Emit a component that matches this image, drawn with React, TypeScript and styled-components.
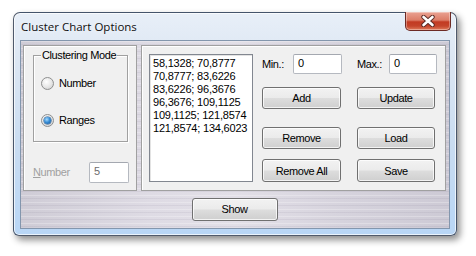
import React from "react";
import styled, { createGlobalStyle, css } from "styled-components";

const GlobalStyle = createGlobalStyle`
  html, body {
    margin: 0;
    padding: 0;
    background: #ffffff;
    width: 476px;
    height: 256px;
    overflow: hidden;
  }
`;

const ranges = [
  "58,1328; 70,8777",
  "70,8777; 83,6226",
  "83,6226; 96,3676",
  "96,3676; 109,1125",
  "109,1125; 121,8574",
  "121,8574; 134,6023",
];

const App: React.FC = () => {
  return (
    <Page>
      <GlobalStyle />
      <Window>
        <TitleBar>
          <Title>Cluster Chart Options</Title>
          <CloseButton>
            <svg width="16" height="12" viewBox="0 0 16 12">
              <path
                d="M3.5 2 L12.5 10 M12.5 2 L3.5 10"
                stroke="#5a2a24"
                strokeWidth="4.4"
                strokeLinecap="round"
              />
              <path
                d="M3.5 2 L12.5 10 M12.5 2 L3.5 10"
                stroke="#ffffff"
                strokeWidth="2.6"
                strokeLinecap="round"
              />
            </svg>
          </CloseButton>
        </TitleBar>
        <Client>
          <PanelRow>
            <LeftPanel>
              <GroupBox>
                <Legend>Clustering Mode</Legend>
                <RadioList>
                  <RadioRow>
                    <Radio />
                    <Label>Number</Label>
                  </RadioRow>
                  <RadioRow>
                    <Radio $checked />
                    <Label>Ranges</Label>
                  </RadioRow>
                </RadioList>
              </GroupBox>
              <NumberRow>
                <Label $disabled>
                  <u>N</u>umber
                </Label>
                <TextBox $width={40} $height={21} $disabled>
                  5
                </TextBox>
              </NumberRow>
            </LeftPanel>
            <RightPanel>
              <ListBox>
                {ranges.map((r) => (
                  <ListItem key={r}>{r}</ListItem>
                ))}
              </ListBox>
              <Controls>
                <ControlColumn>
                  <FieldRow>
                    <Label>Min.:</Label>
                    <TextBox $width={49} $height={20}>
                      0
                    </TextBox>
                  </FieldRow>
                  <Button $mt={13}>Add</Button>
                  <Button $mt={18}>Remove</Button>
                  <Button $mt={10} $h={23}>
                    Remove All
                  </Button>
                </ControlColumn>
                <ControlColumn>
                  <FieldRow>
                    <Label>Max.:</Label>
                    <TextBox $width={48} $height={20}>
                      0
                    </TextBox>
                  </FieldRow>
                  <Button $mt={13} $w={78}>
                    Update
                  </Button>
                  <Button $mt={18} $w={78}>
                    Load
                  </Button>
                  <Button $mt={10} $h={23} $w={78}>
                    Save
                  </Button>
                </ControlColumn>
              </Controls>
            </RightPanel>
          </PanelRow>
          <Footer>
            <Button $w={86} $h={23}>
              Show
            </Button>
          </Footer>
        </Client>
      </Window>
    </Page>
  );
};

export default App;

const uiFont = css`
  font-family: "Liberation Sans", Arial, sans-serif;
  font-size: 11px;
  letter-spacing: -0.4px;
  color: #000;
`;

const Page = styled.div`
  width: 476px;
  height: 256px;
  box-sizing: border-box;
  padding: 12px 0 0 13px;
`;

const Window = styled.div`
  width: 444px;
  height: 224px;
  box-sizing: border-box;
  display: flex;
  flex-direction: column;
  padding: 0 6px 6px 6px;
  border: 1px solid rgba(30, 40, 60, 0.75);
  border-radius: 7px 7px 6px 6px;
  background: linear-gradient(
    to bottom,
    #e8eff8 0%,
    #dde7f3 20%,
    #c9dcf1 60%,
    #b8d6f6 100%
  );
  box-shadow: 3px 4px 7px rgba(0, 0, 0, 0.45),
    inset 0 0 0 1px rgba(255, 255, 255, 0.7);
`;

const TitleBar = styled.div`
  height: 27px;
  display: flex;
  align-items: flex-start;
  justify-content: space-between;
`;

const Title = styled.div`
  font-family: "Open Sans", "Noto Sans", sans-serif;
  font-size: 11.5px;
  color: #101010;
  padding: 6px 0 0 1px;
  text-shadow: 0 0 6px rgba(255, 255, 255, 0.9);
`;

const CloseButton = styled.div`
  width: 46px;
  height: 19px;
  margin-right: -1px;
  margin-top: -1px;
  box-sizing: border-box;
  display: flex;
  align-items: center;
  justify-content: center;
  border: 1px solid #6d2a24;
  border-top: none;
  border-radius: 0 0 5px 5px;
  background: linear-gradient(
    to bottom,
    #eaa292 0%,
    #dc7d68 45%,
    #c23a22 55%,
    #c4442b 78%,
    #e07c5c 100%
  );
  box-shadow: inset 0 0 0 1px rgba(255, 255, 255, 0.35);
`;

const Client = styled.div`
  flex: 1;
  display: flex;
  flex-direction: column;
  border: 1px solid #8396ad;
  padding: 4px 3px 0 2px;
  background-color: #d5d2dc;
  background-image: repeating-linear-gradient(
      to bottom,
      rgba(255, 255, 255, 0.25) 0px,
      rgba(255, 255, 255, 0.25) 1px,
      rgba(0, 0, 0, 0) 1px,
      rgba(0, 0, 0, 0) 3px,
      rgba(90, 80, 110, 0.08) 3px,
      rgba(90, 80, 110, 0.08) 4px,
      rgba(0, 0, 0, 0) 4px,
      rgba(0, 0, 0, 0) 7px
    ),
    linear-gradient(
      to right,
      #cfccd6 0%,
      #dedbe4 30%,
      #e2dfe7 50%,
      #d6d3dd 75%,
      #cdcad5 100%
    );
`;

const PanelRow = styled.div`
  display: flex;
  gap: 4px;
  height: 146px;
`;

const panel = css`
  box-sizing: border-box;
  background: #f0f0f0;
  border: 1px solid #a0a0a0;
  box-shadow: inset 1px 1px 0 #ffffff;
`;

const LeftPanel = styled.div`
  ${panel};
  width: 114px;
  display: flex;
  flex-direction: column;
`;

const RightPanel = styled.div`
  ${panel};
  flex: 1;
  display: flex;
  align-items: flex-start;
  padding: 8px 0 0 7px;
`;

const GroupBox = styled.div`
  position: relative;
  box-sizing: border-box;
  width: 95px;
  height: 87px;
  margin: 9px 0 0 9px;
  border: 1px solid #a0a0a0;
  box-shadow: inset 1px 1px 0 #ffffff, 1px 1px 0 #ffffff;
`;

const Legend = styled.span`
  ${uiFont};
  position: absolute;
  top: -7px;
  left: 7px;
  padding: 0 1px;
  line-height: 13px;
  background: #f0f0f0;
`;

const RadioList = styled.div`
  display: flex;
  flex-direction: column;
  gap: 24px;
  padding: 21px 0 0 7px;
`;

const RadioRow = styled.div`
  display: flex;
  align-items: center;
  gap: 5px;
  height: 13px;
`;

const Radio = styled.span<{ $checked?: boolean }>`
  position: relative;
  width: 13px;
  height: 13px;
  box-sizing: border-box;
  border-radius: 50%;
  border: 1px solid #8e8f8f;
  background: radial-gradient(
    circle at 40% 35%,
    #ffffff 0%,
    #e8e8e8 50%,
    #c9c9c9 100%
  );

  ${({ $checked }) =>
    $checked &&
    css`
      &::after {
        content: "";
        position: absolute;
        left: 2px;
        top: 2px;
        width: 7px;
        height: 7px;
        border-radius: 50%;
        background: radial-gradient(
          circle at 40% 35%,
          #a8dcff 0%,
          #3a8fd6 45%,
          #0b4d93 100%
        );
        box-shadow: 0 0 0 0.5px #1a4f85;
      }
    `}
`;

const Label = styled.span<{ $disabled?: boolean }>`
  ${uiFont};
  line-height: 13px;
  white-space: nowrap;
  color: ${({ $disabled }) => ($disabled ? "#a0a0a0" : "#000")};
`;

const NumberRow = styled.div`
  display: flex;
  align-items: center;
  justify-content: space-between;
  width: 96px;
  margin: 20px 0 0 9px;
`;

const TextBox = styled.div<{ $width: number; $height: number; $disabled?: boolean }>`
  ${uiFont};
  box-sizing: border-box;
  width: ${({ $width }) => $width}px;
  height: ${({ $height }) => $height}px;
  line-height: ${({ $height }) => $height - 4}px;
  padding-left: 4px;
  border: 1px solid #b5b9c0;
  border-top-color: #a4a8b0;
  border-radius: 2px;
  background: #ffffff;
  color: ${({ $disabled }) => ($disabled ? "#6d6d6d" : "#000")};
`;

const ListBox = styled.div`
  box-sizing: border-box;
  width: 104px;
  height: 128px;
  padding: 2px 0 0 3px;
  background: #ffffff;
  border: 1px solid #828790;
  box-shadow: inset 1px 1px 0 #e3e3e3;
`;

const ListItem = styled.div`
  ${uiFont};
  letter-spacing: -0.2px;
  line-height: 13px;
  white-space: nowrap;
`;

const Controls = styled.div`
  display: flex;
  gap: 15px;
  margin-left: 9px;
`;

const ControlColumn = styled.div`
  display: flex;
  flex-direction: column;
  width: 80px;
`;

const FieldRow = styled.div`
  display: flex;
  align-items: center;
  justify-content: space-between;
  height: 20px;
`;

const Button = styled.div<{ $mt?: number; $w?: number; $h?: number }>`
  ${uiFont};
  box-sizing: border-box;
  width: ${({ $w }) => $w ?? 79}px;
  height: ${({ $h }) => $h ?? 22}px;
  margin-top: ${({ $mt }) => $mt ?? 0}px;
  display: flex;
  align-items: center;
  justify-content: center;
  border: 1px solid #707070;
  border-radius: 3px;
  background: linear-gradient(
    to bottom,
    #f2f2f2 0%,
    #ebebeb 48%,
    #dddddd 52%,
    #cfcfcf 100%
  );
  box-shadow: inset 0 0 0 1px rgba(255, 255, 255, 0.75);
`;

const Footer = styled.div`
  flex: 1;
  display: flex;
  align-items: center;
  justify-content: center;
  padding-bottom: 1px;
`;
